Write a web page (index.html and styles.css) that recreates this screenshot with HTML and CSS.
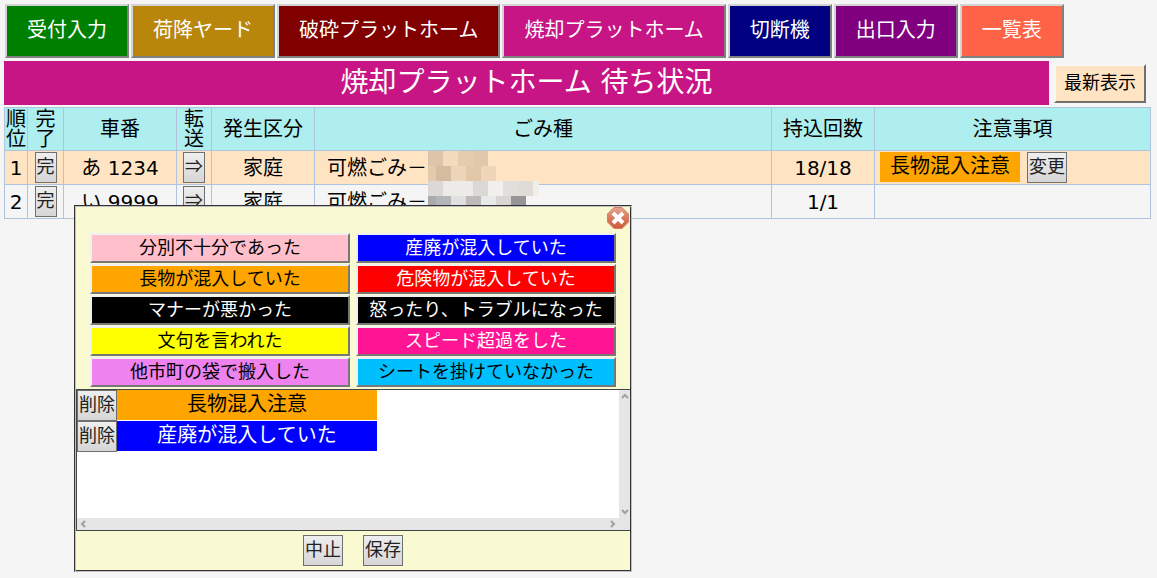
FILE: index.html
```
<!DOCTYPE html>
<html lang="ja">
<head>
<meta charset="utf-8">
<title>焼却プラットホーム 待ち状況</title>
<link rel="stylesheet" href="styles.css">
</head>
<body>
<nav class="menu">
  <button class="menu-btn green">受付入力</button>
  <button class="menu-btn gold">荷降ヤード</button>
  <button class="menu-btn maroon">破砕プラットホーム</button>
  <button class="menu-btn magenta">焼却プラットホーム</button>
  <button class="menu-btn navy">切断機</button>
  <button class="menu-btn purple">出口入力</button>
  <button class="menu-btn tomato">一覧表</button>
</nav>
<header class="title-row">
  <h1 class="title">焼却プラットホーム 待ち状況</h1>
  <button class="refresh">最新表示</button>
</header>
<main class="board">
  <table class="queue">
    <colgroup>
      <col class="c-rank"><col class="c-done"><col class="c-car"><col class="c-send"><col class="c-kind"><col><col class="c-count"><col class="c-note">
    </colgroup>
    <thead>
      <tr><th>順位</th><th class="stack">完了</th><th>車番</th><th class="stack">転送</th><th>発生区分</th><th>ごみ種</th><th>持込回数</th><th>注意事項</th></tr>
    </thead>
    <tbody>
      <tr class="current">
        <td>1</td>
        <td><button class="small">完</button></td>
        <td>あ 1234</td>
        <td><button class="small">⇒</button></td>
        <td>家庭</td>
        <td class="waste">可燃ごみ－
          <svg class="mosaic" width="111" height="60" viewBox="0 0 111 60" shape-rendering="crispEdges" aria-hidden="true">
            <path fill="#dcc5aa" d="M0 0h15v15H0z"/><path fill="#f3dabd" d="M15 0h15v15H15z"/><path fill="#e4ccaf" d="M30 0h15v15H30z"/><path fill="#e1c8aa" d="M45 0h15v15H45z"/>
            <path fill="#e4caad" d="M0 15h8v15H0z"/><path fill="#d6bc9e" d="M8 15h15v15H8z"/><path fill="#edd5b9" d="M23 15h15v15H23z"/><path fill="#e2c8a8" d="M38 15h15v15H38z"/><path fill="#efd6b8" d="M53 15h15v15H53z"/>
            <path fill="#dcd8d5" d="M0 30h15v15H0z"/><path fill="#edebe7" d="M15 30h30v15H15z"/><path fill="#dbd9d6" d="M45 30h15v15H45z"/><path fill="#f2f0ed" d="M60 30h15v15H60z"/><path fill="#e1dfdb" d="M75 30h15v15H75z"/><path fill="#dfdcd8" d="M90 30h15v15H90z"/><path fill="#f1eee9" d="M105 30h6v15h-6z"/>
            <path fill="#abaaaa" d="M0 45h8v15H0z"/><path fill="#b3b5b8" d="M8 45h15v15H8z"/><path fill="#e0e0e0" d="M23 45h15v15H23z"/><path fill="#bcbbba" d="M38 45h15v15H38z"/><path fill="#e7eae9" d="M53 45h15v15H53z"/><path fill="#d7d6d3" d="M68 45h15v15H68z"/><path fill="#969597" d="M83 45h15v15H83z"/>
          </svg>
        </td>
        <td>18/18</td>
        <td class="note"><div class="note-row"><span class="tag orange">長物混入注意</span><button class="small">変更</button></div></td>
      </tr>
      <tr>
        <td>2</td>
        <td><button class="small">完</button></td>
        <td>い 9999</td>
        <td><button class="small">⇒</button></td>
        <td>家庭</td>
        <td class="waste">可燃ごみ－</td>
        <td>1/1</td>
        <td></td>
      </tr>
    </tbody>
  </table>

  <section class="dialog" role="dialog" aria-label="注意事項">
    <div class="panel">
      <button class="close" aria-label="閉じる">
        <svg width="22" height="22" viewBox="0 0 22 22" aria-hidden="true">
          <defs><linearGradient id="red" x1="0" y1="0" x2="0" y2="1"><stop offset="0" stop-color="#e8a58f"/><stop offset=".5" stop-color="#d87a5c"/><stop offset="1" stop-color="#cf5a38"/></linearGradient></defs>
          <path fill="url(#red)" stroke="#cf8067" d="M7 .5h8L21.500 7v8L15 21.500H7L.5 15V7z"/>
          <path stroke="#fff" stroke-width="4" d="M6 6l10 10M16 6L6 16"/>
        </svg>
      </button>
      <div class="reasons">
        <button class="reason pink">分別不十分であった</button>
        <button class="reason blue">産廃が混入していた</button>
        <button class="reason orange">長物が混入していた</button>
        <button class="reason red">危険物が混入していた</button>
        <button class="reason black">マナーが悪かった</button>
        <button class="reason black">怒ったり、トラブルになった</button>
        <button class="reason yellow">文句を言われた</button>
        <button class="reason deeppink">スピード超過をした</button>
        <button class="reason violet">他市町の袋で搬入した</button>
        <button class="reason sky">シートを掛けていなかった</button>
      </div>
      <div class="picked">
        <ul class="picked-list">
          <li class="picked-item"><button class="small">削除</button><span class="picked-name orange">長物混入注意</span></li>
          <li class="picked-item"><button class="small">削除</button><span class="picked-name blue">産廃が混入していた</span></li>
        </ul>
        <div class="track vertical">
          <svg width="11" height="12" viewBox="0 0 11 12" aria-hidden="true"><path class="arrow" d="M3 8l3-3 3 3"/></svg>
          <svg width="11" height="12" viewBox="0 0 11 12" aria-hidden="true"><path class="arrow" d="M3 4l3 3 3-3"/></svg>
        </div>
        <div class="track horizontal">
          <svg width="12" height="12" viewBox="0 0 12 12" aria-hidden="true"><path class="arrow" d="M8 3L5 6l3 3"/></svg>
          <svg width="12" height="12" viewBox="0 0 12 12" aria-hidden="true"><path class="arrow" d="M4 3l3 3-3 3"/></svg>
        </div>
        <div class="track"></div>
      </div>
      <div class="actions">
        <button class="small">中止</button>
        <button class="small">保存</button>
      </div>
    </div>
  </section>
</main>
</body>
</html>
```
FILE: styles.css
```
* { box-sizing: border-box; }
html { background: #f5f5f5; }
body {
  min-height: calc(100vh - 8px);
  margin: 4px 6px 4px 4px;
  color: #000;
  font: 20px/30px "DejaVu Sans", "Noto Sans CJK JP", sans-serif;
}
button { font-family: "Noto Sans CJK JP", sans-serif; color: inherit; margin: 0; }

.menu { display: flex; gap: 2px; padding-left: 1px; }
.menu-btn {
  padding: 8px 20px 12px;
  border: 2px solid;
  border-color: #d3d3d3 #808080 #808080 #d3d3d3;
  color: #fff;
  font-size: 20px;
  line-height: 30px;
}
.green { background: #008000; }
.gold { background: #b8860b; }
.maroon { background: #800000; }
.magenta { background: #c71585; }
.navy { background: #000080; }
.purple { background: #800080; }
.tomato { background: #ff6347; }

.title-row { display: flex; align-items: center; gap: 5px; margin-top: 3px; padding-right: 5px; }
.title {
  flex: 1;
  margin: 0;
  padding: 2px 0;
  background: #c71585;
  color: #fff;
  font-size: 28px;
  font-weight: 400;
  line-height: 40px;
  text-align: center;
}
.refresh {
  padding: 0 8px 5px;
  border: 2px solid;
  border-color: #f8f8f8 #707070 #707070 #f8f8f8;
  background: #ffe4c4;
  font-size: 18px;
  line-height: 30px;
}

.board { position: relative; min-height: 470px; margin-top: 2px; }
.queue { width: 100%; table-layout: fixed; border-collapse: collapse; text-align: center; }
.queue th, .queue td { border: 1px solid #b0c4de; padding: 1px 0; }
.queue th { height: 43px; background: #afeeee; font-weight: 400; line-height: 20px; }
.queue td { height: 34px; line-height: 30px; }
.c-rank { width: 23px; }
.c-done { width: 36px; }
.c-car { width: 113px; }
.c-send { width: 35px; }
.c-kind { width: 103px; }
.c-count { width: 103px; }
.c-note { width: 276px; }
.queue .stack { padding: 1px 7px; }
.current { background: #ffe4c4; }
.queue .waste { position: relative; padding-left: 12px; text-align: left; }
.mosaic { position: absolute; top: 0; left: 113px; }
.note-row { display: flex; gap: 7px; padding-left: 5px; }
.tag { padding: 0 10px; height: 30px; line-height: 28px; }

.small {
  height: 31px;
  padding: 0 1px 4px;
  border: 1px solid #707070;
  background: linear-gradient(#eee, #d6d6d6);
  color: #222;
  font-size: 18px;
  line-height: 25px;
  vertical-align: top;
}

.dialog {
  position: absolute;
  top: 98px;
  left: 70px;
  width: 558px;
  padding: 1px;
  border: 1px solid;
  border-color: #333 #c0c0c0 #c0c0c0 #333;
  background: #fafad2;
  box-shadow: inset 1px 1px #c0c0c0, inset -1px -1px #333;
}
.close { position: absolute; top: 1px; right: 2px; padding: 0; border: 0; background: none; line-height: 0; }
.reasons { display: grid; grid-template-columns: 1fr 1fr; gap: 1px 6px; padding: 26px 14px 2px; }
.reason {
  height: 30px;
  padding: 0 0 4px;
  border: 2px solid;
  border-color: #f0f0f0 #777 #777 #f0f0f0;
  font-size: 18px;
  line-height: 22px;
}
.pink { background: #ffc0cb; }
.orange { background: #ffa500; }
.blue { background: #00f; color: #fff; }
.red { background: #f00; color: #fff; }
.black { background: #000; color: #fff; }
.yellow { background: #ff0; }
.deeppink { background: #ff1493; color: #fff; }
.violet { background: #ee82ee; }
.sky { background: #00bfff; }

.picked {
  display: grid;
  grid-template: 128px 12px / 1fr 11px;
  border: 1px solid #444;
  border-right: 0;
  background: #fff;
}
.picked-list { margin: 0; padding: 0; list-style: none; }
.picked-item { display: flex; }
.picked-name { width: 260px; height: 30px; line-height: 28px; text-align: center; }
.track { display: flex; justify-content: space-between; background: #e6e6e6; }
.vertical { flex-direction: column; }
.arrow { fill: none; stroke: #a0a0a0; stroke-width: 2; }
.actions { display: flex; justify-content: center; gap: 20px; padding: 4px; }
```
